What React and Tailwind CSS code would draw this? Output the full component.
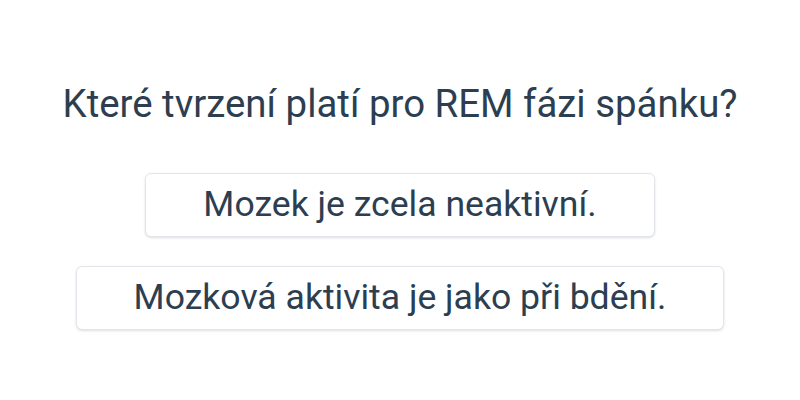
export default function App() {
  const options = ['Mozek je zcela neaktivní.', 'Mozková aktivita je jako při bdění.'];

  return (
    <div className="h-[400px] w-[800px] bg-white flex flex-col items-center pt-[81px] font-['Roboto',sans-serif] text-[#2c3e50]">
      <h1 className="text-[38.4px] leading-[46px] mb-[46px]">Které tvrzení platí pro REM fázi spánku?</h1>
      <div className="flex flex-col items-center gap-[29px]">
        {options.map((opt) => (
          <button
            key={opt}
            className="h-[64px] px-[57px] bg-white border border-[#e2e6ea] rounded-md shadow-sm text-[35.6px] text-[#2c3e50]"
          >
            {opt}
          </button>
        ))}
      </div>
    </div>
  );
}
